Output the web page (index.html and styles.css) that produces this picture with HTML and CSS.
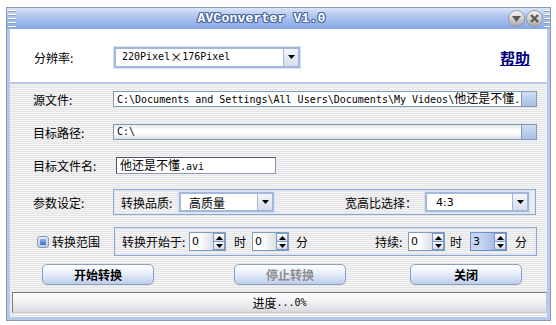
FILE: index.html
```html
<!DOCTYPE html>
<html lang="zh">

<head>
    <meta charset="UTF-8">
    <title>AVConverter V1.0</title>
    <link rel="stylesheet" href="styles.css">
</head>

<body>
    <div class="window">
        <div class="titlebar">
            <span class="grip"></span>
            <span class="title">AVConverter V1.0</span>
            <span class="tbtn">
                <svg width="9" height="6" viewBox="0 0 9 6"><polygon points="0,0 9,0 4.5,6" fill="#5a5a5a" /></svg>
            </span>
            <span class="tbtn">
                <svg width="9" height="9" viewBox="0 0 9 9"><path d="M1 1 L8 8 M8 1 L1 8" stroke="#5a5a5a" stroke-width="2.4" /></svg>
            </span>
            <span class="grip"></span>
        </div>

        <div class="client">
            <div class="top-panel">
                <span class="lbl">分辨率:</span>
                <div class="combo combo-res">
                    <span class="combo-text mono">220Pixel<span class="cjk">×</span>176Pixel</span>
                    <span class="combo-btn">
                        <svg width="7" height="4" viewBox="0 0 7 4"><polygon points="0,0 7,0 3.5,4" fill="#000" /></svg>
                    </span>
                </div>
                <a href="#" class="help">帮助</a>
            </div>

            <div class="main-panel">
                <div class="row row-1">
                    <span class="lbl">源文件:</span>
                    <div class="path-field">
                        <span class="field-text mono">C:\Documents and Settings\All Users\Documents\My Videos\<span class="cjk">他还是不懂</span>.rmvb</span>
                    </div>
                    <span class="browse"></span>
                </div>

                <div class="row row-2">
                    <span class="lbl">目标路径:</span>
                    <div class="path-field">
                        <span class="field-text mono">C:\</span>
                    </div>
                    <span class="browse"></span>
                </div>

                <div class="row row-3">
                    <span class="lbl lbl-wide">目标文件名:</span>
                    <div class="name-field">
                        <span class="field-text mono"><span class="cjk">他还是不懂</span>.avi</span>
                    </div>
                </div>

                <div class="row row-4">
                    <span class="lbl">参数设定:</span>
                    <div class="group">
                        <span class="glbl-q">转换品质:</span>
                        <div class="combo combo-q">
                            <span class="combo-text">高质量</span>
                            <span class="combo-btn">
                                <svg width="7" height="4" viewBox="0 0 7 4"><polygon points="0,0 7,0 3.5,4" fill="#000" /></svg>
                            </span>
                        </div>
                        <span class="glbl-r">宽高比选择：</span>
                        <div class="combo combo-r">
                            <span class="combo-text num">4:3</span>
                            <span class="combo-btn">
                                <svg width="7" height="4" viewBox="0 0 7 4"><polygon points="0,0 7,0 3.5,4" fill="#000" /></svg>
                            </span>
                        </div>
                    </div>
                </div>

                <div class="row row-5">
                    <span class="lbl chk-wrap"><span class="chk"></span>转换范围</span>
                    <div class="group group-range">
                        <span class="glbl-start">转换开始于:</span>
                        <div class="spin">
                            <span class="spin-text num">0</span>
                            <span class="spin-btns">
                                <span class="spin-up"><svg width="7" height="4" viewBox="0 0 7 4"><polygon points="0,4 7,4 3.5,0" fill="#000" /></svg></span>
                                <span class="spin-down"><svg width="7" height="4" viewBox="0 0 7 4"><polygon points="0,0 7,0 3.5,4" fill="#000" /></svg></span>
                            </span>
                        </div>
                        <span class="unit unit-h">时</span>
                        <div class="spin">
                            <span class="spin-text num">0</span>
                            <span class="spin-btns">
                                <span class="spin-up"><svg width="7" height="4" viewBox="0 0 7 4"><polygon points="0,4 7,4 3.5,0" fill="#000" /></svg></span>
                                <span class="spin-down"><svg width="7" height="4" viewBox="0 0 7 4"><polygon points="0,0 7,0 3.5,4" fill="#000" /></svg></span>
                            </span>
                        </div>
                        <span class="unit unit-m">分</span>

                        <span class="glbl-dur">持续:</span>
                        <div class="spin">
                            <span class="spin-text num">0</span>
                            <span class="spin-btns">
                                <span class="spin-up"><svg width="7" height="4" viewBox="0 0 7 4"><polygon points="0,4 7,4 3.5,0" fill="#000" /></svg></span>
                                <span class="spin-down"><svg width="7" height="4" viewBox="0 0 7 4"><polygon points="0,0 7,0 3.5,4" fill="#000" /></svg></span>
                            </span>
                        </div>
                        <span class="unit unit-h2">时</span>
                        <div class="spin spin-active">
                            <span class="spin-text num">3</span>
                            <span class="spin-btns">
                                <span class="spin-up"><svg width="7" height="4" viewBox="0 0 7 4"><polygon points="0,4 7,4 3.5,0" fill="#000" /></svg></span>
                                <span class="spin-down"><svg width="7" height="4" viewBox="0 0 7 4"><polygon points="0,0 7,0 3.5,4" fill="#000" /></svg></span>
                            </span>
                        </div>
                        <span class="unit unit-m2">分</span>
                    </div>
                </div>

                <div class="row row-6">
                    <button class="btn btn-start">开始转换</button>
                    <button class="btn btn-stop" disabled>停止转换</button>
                    <button class="btn btn-close">关闭</button>
                </div>

                <div class="statusbar">进度<span class="mono">...0%</span></div>
            </div>
        </div>
    </div>
</body>

</html>
```

FILE: styles.css
```css
body {
    margin: 0;
    padding: 7px 0 0 6px;
    background: #fff;
    font-family: "Noto Sans CJK SC", sans-serif;
    font-size: 12px;
    color: #000;
}

.window {
    width: 545px;
    height: 314px;
    box-sizing: border-box;
    border: 1px solid #8d99ae;
    display: flex;
    flex-direction: column;
}

/* title bar */
.titlebar {
    height: 21px;
    flex: none;
    display: flex;
    align-items: center;
    background: linear-gradient(#dbe5f8, #b3c8f0 35%, #86a8e6);
}

.grip {
    width: 8px;
    height: 17px;
    margin-left: 1px;
    background: repeating-linear-gradient(#ffffff 0 1px, #8ba3cf 1px 2px, transparent 2px 4px);
}

.titlebar .grip:last-child {
    margin-left: 1px;
    width: 6px;
}

.title {
    flex: 1;
    text-align: center;
    font-family: "Liberation Mono", monospace;
    font-weight: bold;
    font-size: 13px;
    letter-spacing: 0.2px;
    color: #fff;
    text-shadow: 1px 0 #4c68a6, -1px 0 #4c68a6, 0 1px #4c68a6, 0 -1px #4c68a6,
        1px 1px #4c68a6, -1px -1px #4c68a6, 1px -1px #4c68a6, -1px 1px #4c68a6;
}

.tbtn {
    width: 15px;
    height: 15px;
    margin-left: 1px;
    border: 1px solid #8e98ac;
    border-radius: 50%;
    background: linear-gradient(#f6f6f6, #d2d2d2 50%, #a9a9a9);
    display: flex;
    align-items: center;
    justify-content: center;
}

/* client area */
.client {
    flex: 1;
    display: flex;
    flex-direction: column;
    border: 3px solid #b6caee;
    border-top: none;
}

.top-panel {
    height: 53px;
    flex: none;
    display: flex;
    align-items: center;
    padding: 3px 0 0 24px;
    box-sizing: border-box;
    background: #fff;
}

.lbl {
    width: 80px;
    flex: none;
}

.help {
    margin-left: auto;
    margin-right: 17px;
    font-size: 15px;
    font-weight: bold;
    color: #000080;
    text-decoration: underline;
}

.mono {
    font-family: "DejaVu Sans Mono", monospace;
    font-size: 10px;
    line-height: 14px;
}

.cjk {
    font-family: "Noto Sans CJK SC", sans-serif;
    font-size: 12px;
    line-height: 14px;
}

.num {
    font-family: "DejaVu Sans", sans-serif;
    font-size: 11px;
}

/* combo boxes */
.combo {
    display: flex;
    box-sizing: border-box;
    border: 2px solid #a3b8dd;
    background: #fff;
    outline: 1px solid #d8e2f2;
}

.combo-text {
    flex: 1;
    display: flex;
    align-items: center;
    padding-left: 6px;
    overflow: hidden;
    white-space: nowrap;
}

.combo-btn {
    width: 14px;
    flex: none;
    border-left: 1px solid #a3b8dd;
    background: linear-gradient(#f4f6fa, #d6dceb);
    display: flex;
    align-items: center;
    justify-content: center;
}

.combo-res {
    width: 186px;
    height: 21px;
}

/* striped main panel */
.main-panel {
    flex: 1;
    border-top: 2px solid #bac8e2;
    padding: 5px 0 3px 0;
    background: repeating-linear-gradient(#f4f4f4 0 1px, #e5e5e7 1px 2px);
}

.row {
    display: flex;
    align-items: center;
    padding-left: 23px;
}

.row-1,
.row-2 {
    height: 20px;
}

.row-2 {
    margin-top: 13px;
}

.row-3 {
    height: 21px;
    margin-top: 13px;
}

.row-4 {
    height: 26px;
    margin-top: 13px;
}

.row-5 {
    height: 29px;
    margin-top: 12px;
}

.path-field {
    width: 408px;
    height: 16px;
    box-sizing: border-box;
    border: 1px solid #7f9db9;
    border-right: none;
    background: linear-gradient(#e4e6ea, #ffffff 35%, #ffffff 60%, #dcdee4);
    display: flex;
    align-items: center;
    overflow: hidden;
    white-space: nowrap;
}

.row-1 .path-field {
    background: #fff;
}

.field-text {
    padding-left: 3px;
}

.browse {
    width: 16px;
    height: 16px;
    box-sizing: border-box;
    border: 1px solid #7f9db9;
    background: linear-gradient(#d2def4, #a8bfe6);
}

.lbl-wide {
    width: 83px;
}

.name-field {
    width: 160px;
    height: 17px;
    box-sizing: border-box;
    border: 1px solid #8a96ac;
    border-left-color: #4c5468;
    border-top-color: #4c5468;
    background: #fff;
    display: flex;
    align-items: center;
    overflow: hidden;
}

/* group boxes */
.group {
    width: 423px;
    height: 100%;
    box-sizing: border-box;
    border: 1px solid #8fa7d0;
    box-shadow: inset 0 0 0 1px #dfe7f5;
    display: flex;
    align-items: center;
    padding: 0 6px 0 7px;
}

.glbl-q {
    width: 58px;
}

.combo-q {
    width: 95px;
    height: 20px;
}

.combo-q .combo-text {
    font-size: 12px;
    padding-left: 8px;
}

.glbl-r {
    margin-left: auto;
    width: 80px;
}

.combo-r {
    width: 104px;
    height: 20px;
}

.combo-r .combo-text {
    padding-left: 9px;
}

/* range row */
.chk-wrap {
    width: 81px;
    display: flex;
    align-items: center;
    padding-left: 4px;
    box-sizing: border-box;
}

.chk {
    width: 12px;
    height: 12px;
    box-sizing: border-box;
    margin-right: 3px;
    border: 1px solid #8d9bb6;
    border-radius: 3px;
    background: linear-gradient(#e4e8f0, #c4ccdc);
    display: flex;
    align-items: center;
    justify-content: center;
}

.chk::after {
    content: "";
    width: 6px;
    height: 6px;
    background: linear-gradient(#8fb2ee, #3f6fc8);
}

.glbl-start {
    width: 67px;
}

.spin {
    width: 37px;
    height: 19px;
    box-sizing: border-box;
    border: 1px solid #7f9db9;
    display: flex;
}

.spin-text {
    flex: 1;
    display: flex;
    align-items: center;
    padding-left: 2px;
    background: linear-gradient(90deg, #ffffff 40%, #dcdfe6);
}

.spin-active .spin-text {
    background: linear-gradient(90deg, #c6d6f2 40%, #a6bde6);
}

.spin-active {
    border-color: #6f8fc8;
}

.spin-btns {
    width: 12px;
    display: flex;
    flex-direction: column;
    background: #7a9bd0;
    padding: 1px;
    gap: 1px;
    box-sizing: border-box;
}

.spin-up,
.spin-down {
    flex: 1;
    background: linear-gradient(#ffffff, #d6dae2);
    display: flex;
    align-items: center;
    justify-content: center;
}

.unit-h {
    margin: 0 6px 0 8px;
}

.unit-m {
    margin-left: 7px;
}

.glbl-dur {
    margin-left: 67px;
    width: 33px;
}

.unit-h2 {
    margin: 0 8px 0 5px;
}

.unit-m2 {
    margin-left: 8px;
}

/* buttons */
.row-6 {
    height: 21px;
    margin-top: 8px;
    padding-left: 32px;
}

.btn {
    width: 112px;
    height: 21px;
    padding: 0;
    border: 1px solid #8a9ec4;
    border-radius: 5px;
    background: linear-gradient(#ffffff, #e8eef9 45%, #bccdeb);
    font-family: "Noto Sans CJK SC", sans-serif;
    font-size: 12px;
    font-weight: bold;
    color: #000;
}

.btn-stop {
    margin-left: 80px;
    color: #8c8c8c;
}

.btn-close {
    margin-left: 64px;
}

/* status bar */
.statusbar {
    height: 21px;
    margin: 7px 0 0 2px;
    box-sizing: border-box;
    border: 1px solid #7c7c84;
    border-right-color: #c8c8cc;
    border-bottom-color: #c8c8cc;
    background: linear-gradient(#ffffff, #f0f0f2 50%, #dadade);
    display: flex;
    align-items: center;
    justify-content: center;
}
```
